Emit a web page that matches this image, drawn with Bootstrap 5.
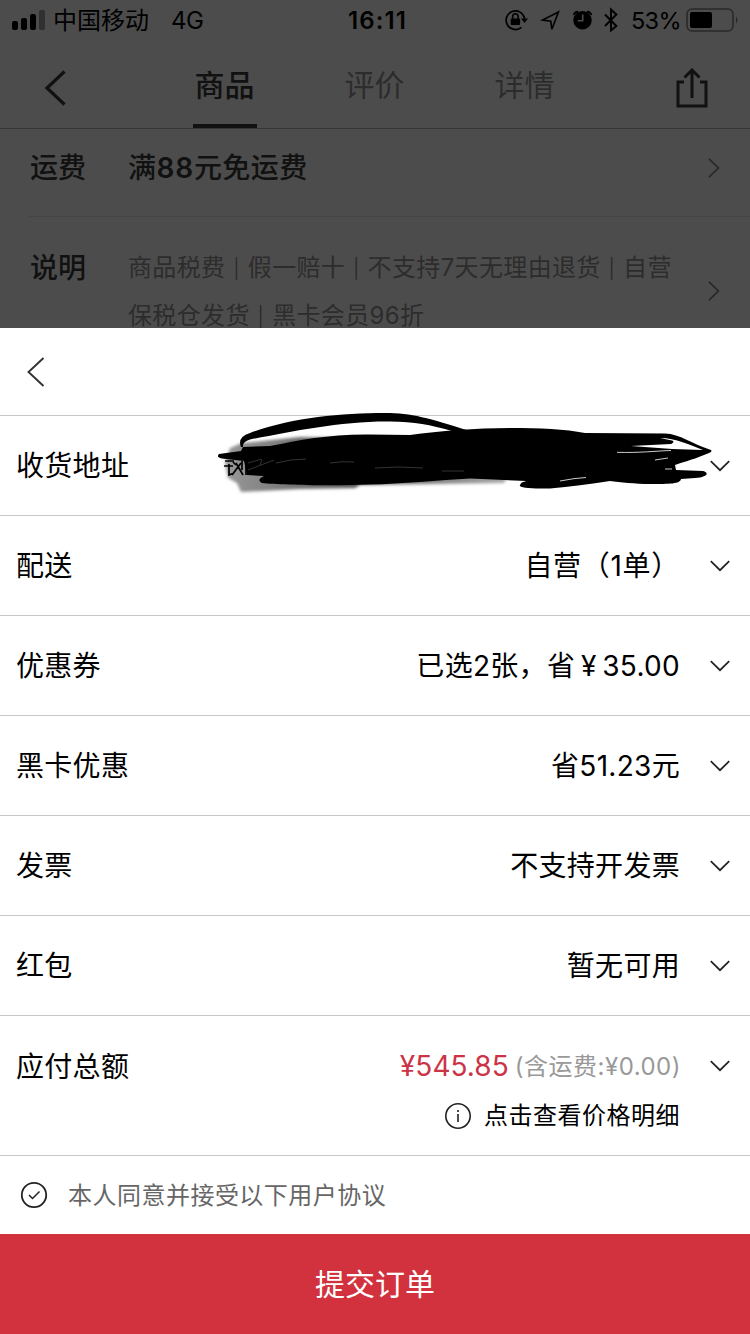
<!DOCTYPE html>
<html lang="zh-CN">
<head>
<meta charset="utf-8">
<meta name="viewport" content="width=device-width, initial-scale=1">
<title>确认订单</title>
<link href="https://cdn.jsdelivr.net/npm/bootstrap@5.3.0/dist/css/bootstrap.min.css" rel="stylesheet">
<style>
  body { font-family: Inter, "Noto Sans CJK SC", sans-serif; font-size: 28px; line-height: 40px; letter-spacing: .3px; color: #000; background: #fff; }
  svg { display: block; flex: none; }
  .screen { width: 750px; height: 1334px; overflow: hidden; }
  .backdrop-page { height: 328px; background: #4c4c4c; overflow: hidden; color: #111; }
  .status-bar { height: 40px; padding: 0 10px 0 12px; font-size: 24px; line-height: 40px; color: #000; letter-spacing: 0; }
  .status-side { width: 336px; }
  .status-side span { padding-top: 2px; }
  .clock { font-weight: 600; font-size: 24px; letter-spacing: 1.1px; padding-top: 1px; }
  .network { margin-left: 22px; letter-spacing: -.5px; }
  .battery-level { font-size: 23.500px; letter-spacing: -.7px; width: 51px; margin-left: 9px; padding-top: 1px; }
  .top-nav { height: 89px; border-bottom: 1px solid #363636; padding: 0 42px 0 44px; }
  .tab-item { width: 64px; height: 88px; padding-right: 1px; font-size: 30px; line-height: 90px; letter-spacing: 0; text-align: center; color: #2c2c2c; border-bottom: 4px solid transparent; }
  .tab-item.active { color: #111; font-weight: 500; border-bottom-color: #111; }
  .tab-group { gap: 86px; margin-left: 127px; }
  .info-row { margin-left: 28px; padding: 0 30px 0 2px; }
  .info-freight { height: 88px; border-bottom: 1px solid #454545; padding-bottom: 10px; }
  .info-freight span { padding-top: 1px; }
  .info-name { width: 98px; font-weight: 500; letter-spacing: 0; }
  .freight-text { font-weight: 500; letter-spacing: .45px; }
  .freight-text b { font-weight: 600; letter-spacing: .8px; }
  .info-notes { padding-top: 27px; }
  .info-notes .info-name { line-height: 48px; }
  .info-notes svg { margin-top: 37px; }
  .info-desc { font-size: 24px; line-height: 48px; color: #2c2c2c; letter-spacing: .35px; white-space: nowrap; }
  .bar { display: inline-block; width: 22.400px; font-size: 19px; line-height: 1; text-align: center; vertical-align: 1px; }
  .sheet-head { height: 87px; padding-left: 27px; }
  .order-row { height: 100px; border-top: 1px solid #c6c6c6; padding: 0 20px 0 16px; }
  .order-row > span { padding-top: 1px; }
  .row-value { margin-right: 30px; }
  .total-row { height: 140px; border-top: 1px solid #c6c6c6; padding: 29px 20px 0 16px; }
  .total-label { padding-top: 1px; }
  .price { color: #cb3446; letter-spacing: .05px; }
  .ship-note { color: #999; font-size: 24px; letter-spacing: .5px; margin: 2px -1px 0 6px; }
  .detail-link { font-size: 24px; letter-spacing: .5px; gap: 13px; margin: 8px 50px 0 0; }
  .detail-link span { padding-top: 1px; }
  .agree-row { height: 79px; border-top: 1px solid #c6c6c6; padding-left: 20px; gap: 20px; font-size: 24px; letter-spacing: .48px; color: #666; }
  .agree-row span { padding-top: 2px; }
  .submit-btn { height: 100px; background: #d2323e; color: #fff; font-size: 30px; letter-spacing: 0; border: 0; border-radius: 0; padding-top: 7px; }
  .scribble { left: 210px; top: -10px; z-index: 2; }
</style>
</head>
<body>
<svg width="0" height="0" class="position-absolute">
  <symbol id="down" viewBox="0 0 20 12"><path d="M.8 1.2 10 10.2 19.2 1.2" fill="none" stroke="#222" stroke-width="1.7"/></symbol>
  <symbol id="right" viewBox="0 0 12 20"><path d="M1 .8 10.4 10 1 19.2" fill="none" stroke="#282828" stroke-width="1.7"/></symbol>
</svg>
<main class="screen d-flex flex-column">
  <section class="backdrop-page">
    <div class="status-bar d-flex align-items-center">
      <div class="status-side d-flex align-items-center">
        <svg width="33" height="20" viewBox="0 0 33 20"><rect x="0" y="11" width="6" height="9" rx="2"/><rect x="9" y="8" width="6" height="12" rx="2"/><rect x="18" y="4" width="6" height="16" rx="2"/><rect x="27" y="0" width="6" height="20" rx="2" fill="#303030"/></svg>
        <span class="ms-2">中国移动</span><span class="network">4G</span>
      </div>
      <span class="clock">16:11</span>
      <div class="d-flex align-items-center ms-auto">
        <svg width="120" height="28" viewBox="502 6 120 28">
          <path d="M524.600 18.500A9.300 9.300 0 1 0 521.500 27.300" fill="none" stroke="#000" stroke-width="1.700"/>
          <path d="M521 18.500h7l-3.500 4.500z"/>
          <rect x="510.700" y="18.500" width="9.400" height="6.500" rx="1"/><path d="M512.700 19v-2.500a2.700 2.700 0 0 1 5.400 0V19" fill="none" stroke="#000" stroke-width="1.600"/>
          <path d="M558.500 12 542.500 20l8.300 1.100 1.100 8.200z" fill="none" stroke="#000" stroke-width="1.600" stroke-linejoin="miter"/>
          <circle cx="582.500" cy="20.300" r="9.200"/><path d="M582.700 14.500v6.300h-5" fill="none" stroke="#4c4c4c" stroke-width="1.600"/>
          <path d="M574 15c-.5-1.500 2-3.600 4-3M591 15c.5-1.500-2-3.600-4-3" fill="none" stroke="#000" stroke-width="2"/>
          <path d="M605 14.500 616.400 26 611 30.500V9.500l5.400 5L605 26" fill="none" stroke="#000" stroke-width="1.900"/>
        </svg>
        <span class="battery-level">53%</span>
        <svg width="54" height="24" viewBox="0 0 54 24" style="margin-left:4px"><rect x="1" y="1" width="46" height="22" rx="5" fill="none" stroke="#292929" stroke-width="1.600"/><rect x="4" y="4" width="22" height="16" rx="2"/><path d="M50 8.500q3 3.500 0 7z" fill="#292929"/></svg>
      </div>
    </div>
    <nav class="top-nav d-flex align-items-center">
      <svg width="22" height="36" viewBox="0 0 22 36" class="mt-2"><path d="M20.500 1.500 3 18 20.500 34.500" fill="none" stroke="#111" stroke-width="3.200"/></svg>
      <div class="tab-group d-flex">
        <span class="tab-item active">商品</span><span class="tab-item">评价</span><span class="tab-item">详情</span>
      </div>
      <svg width="32" height="40" viewBox="0 0 32 40" class="ms-auto mt-2"><path d="M8 14H2v24h28V14h-6M16 30V2.500M8.500 9.500 16 2l7.500 7.500" fill="none" stroke="#111" stroke-width="3"/></svg>
    </nav>
    <div class="info-row info-freight d-flex align-items-center">
      <span class="info-name">运费</span><span class="freight-text">满<b>88</b>元免运费</span>
      <svg class="ms-auto" width="12" height="20"><use href="#right"/></svg>
    </div>
    <div class="info-row info-notes d-flex">
      <span class="info-name">说明</span>
      <div class="info-desc">商品税费<span class="bar">|</span>假一赔十<span class="bar">|</span>不支持7天无理由退货<span class="bar">|</span>自营<br>保税仓发货<span class="bar">|</span>黑卡会员96折</div>
      <svg class="ms-auto" width="12" height="20"><use href="#right"/></svg>
    </div>
  </section>

  <section class="bg-white">
    <div class="sheet-head d-flex align-items-center">
      <svg width="18" height="30" viewBox="0 0 18 30"><path d="M16.500 1 1.500 15 16.500 29" fill="none" stroke="#333" stroke-width="1.900"/></svg>
    </div>
    <div class="order-row d-flex align-items-center justify-content-between position-relative">
      <span>收货地址</span><svg width="20" height="12"><use href="#down"/></svg>
      <svg class="scribble position-absolute" width="510" height="95" viewBox="210 406 510 95">
        <defs><filter id="soft" x="-10%" y="-30%" width="120%" height="160%"><feGaussianBlur stdDeviation="1.800"/></filter>
        <linearGradient id="smudge" x1="0" x2="1"><stop offset="0" stop-color="#999"/><stop offset=".45" stop-color="#555"/><stop offset="1" stop-color="#aaa"/></linearGradient></defs>
        <path d="M225 463 230 448 242 443 300 437 350 438 370 465 508 476 504 483 360 485 355 488 300 489 241 492 237 483 228 478Z" fill="url(#smudge)" filter="url(#soft)"/>
        <path d="M241 447Q237 437 250 433C290 418 340 413 385 413 412 413 428 418 470 431L452 431C430 425 415 421.500 390 421.500 340 421 290 432 250 439.500Q242 442 243 447Z"/>
        <path d="M219 454 241 451 243 447 270 446C300 440 330 434 370 434.500L410 435C440 431 475 428 510 428 540 428 565 429 585 433L665 433.500C680 434 692 444 711 450 713 452 708 453 704 455 692 460 680 463 675 465L676 470 703 471C710 473 707 477 695 478L681 479C680 484 670 484 650 484 635 484 620 482 610 481 590 484 570 487 550 488.500 530 489 518 488 520 485 522 481 525 482 526 481L470 478.500C440 480 400 484 370 484.500 330 486 280 485 262 483 257 480 260 478 264 476L247 475 244 461 226 459C217 458 217 456 219 454Z"/>
        <path d="M631 446 671 444C674 443 674 441 672 440.500L660 438C676 438 690 445 703 450L672 449Z" fill="#fff"/>
        <path d="M617 452.300C640 453 655 451 671 450.500M655 460l13-2M665 469h7M560 481q15-3 26-3.500" fill="none" stroke="#ccc" stroke-width="1"/>
        <path d="M248 463l14-4M248 470l26-10M262 460l-2 5M276 463q15-4 30-4M330 463q12-2 24-1M375 468q22-2 48 0M442 471h22" fill="none" stroke="#333" stroke-width="1"/>
        <path d="M225 461h9M224 466h9M229 464v11l5-2M236 463l7 12M242 461v9M246 461v14M233 462l3 3M241 463l-9 12" fill="none" stroke="#000" stroke-width="1.700"/>
      </svg>
    </div>
    <div class="order-row d-flex align-items-center"><span>配送</span><span class="row-value ms-auto" style="letter-spacing:.7px">自营（1单）</span><svg width="20" height="12"><use href="#down"/></svg></div>
    <div class="order-row d-flex align-items-center"><span>优惠券</span><span class="row-value ms-auto" style="word-spacing:-2.500px">已选2张，省 ¥ 35.00</span><svg width="20" height="12"><use href="#down"/></svg></div>
    <div class="order-row d-flex align-items-center"><span>黑卡优惠</span><span class="row-value ms-auto">省51.23元</span><svg width="20" height="12"><use href="#down"/></svg></div>
    <div class="order-row d-flex align-items-center"><span>发票</span><span class="row-value ms-auto">不支持开发票</span><svg width="20" height="12"><use href="#down"/></svg></div>
    <div class="order-row d-flex align-items-center"><span>红包</span><span class="row-value ms-auto">暂无可用</span><svg width="20" height="12"><use href="#down"/></svg></div>
    <div class="total-row">
      <div class="d-flex align-items-center"><span class="total-label">应付总额</span><span class="row-value ms-auto d-flex align-items-center"><span class="price">¥545.85</span><span class="ship-note">(含运费:¥0.00)</span></span><svg width="20" height="12"><use href="#down"/></svg></div>
      <div class="detail-link d-flex align-items-center justify-content-end">
        <svg width="26" height="26" viewBox="0 0 26 26"><circle cx="13" cy="13" r="12.200" fill="none" stroke="#222" stroke-width="1.600"/><path d="M12.200 7h1.600v2h-1.600zM12.200 11h1.600v8h-1.600z" fill="#222"/></svg>
        <span>点击查看价格明细</span>
      </div>
    </div>
    <div class="agree-row d-flex align-items-center">
      <svg width="28" height="28" viewBox="0 0 28 28"><circle cx="14" cy="14" r="12.200" fill="none" stroke="#222" stroke-width="1.800"/><path d="M9 14l3.500 3.500 7-7" fill="none" stroke="#222" stroke-width="1.500"/></svg>
      <span>本人同意并接受以下用户协议</span>
    </div>
  </section>
  <button class="submit-btn btn w-100">提交订单</button>
</main>
<script src="https://cdn.jsdelivr.net/npm/bootstrap@5.3.0/dist/js/bootstrap.bundle.min.js"></script>
</body>
</html>
